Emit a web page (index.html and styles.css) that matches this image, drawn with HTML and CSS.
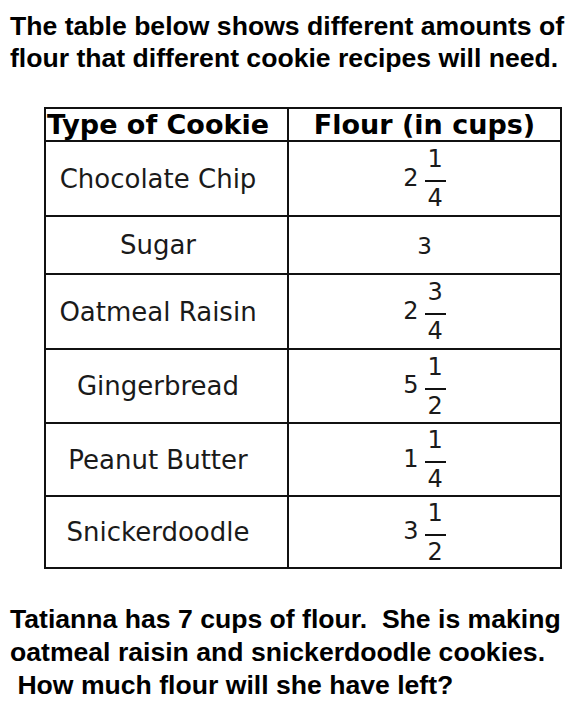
FILE: index.html
```html
<!DOCTYPE html>
<html>
<head>
<meta charset="utf-8">
<link rel="stylesheet" href="styles.css">
</head>
<body>
<p class="prompt">The table below shows different amounts of flour that different cookie recipes will need.</p>
<table class="recipes">
  <tr class="head"><th class="c1">Type of Cookie</th><th class="c2">Flour (in cups)</th></tr>
  <tr class="r1"><td class="c1">Chocolate Chip</td><td class="c2"><span class="mixed"><span class="whole">2</span><span class="frac"><span class="num">1</span><span class="den">4</span></span></span></td></tr>
  <tr class="r2"><td class="c1">Sugar</td><td class="c2"><span class="plain">3</span></td></tr>
  <tr class="r3"><td class="c1">Oatmeal Raisin</td><td class="c2"><span class="mixed"><span class="whole">2</span><span class="frac"><span class="num">3</span><span class="den">4</span></span></span></td></tr>
  <tr class="r4"><td class="c1">Gingerbread</td><td class="c2"><span class="mixed"><span class="whole">5</span><span class="frac"><span class="num">1</span><span class="den">2</span></span></span></td></tr>
  <tr class="r5"><td class="c1">Peanut Butter</td><td class="c2"><span class="mixed"><span class="whole">1</span><span class="frac"><span class="num">1</span><span class="den">4</span></span></span></td></tr>
  <tr class="r6"><td class="c1">Snickerdoodle</td><td class="c2"><span class="mixed"><span class="whole">3</span><span class="frac"><span class="num">1</span><span class="den">2</span></span></span></td></tr>
</table>
<p class="question">Tatianna has 7 cups of flour.&nbsp; She is making oatmeal raisin and snickerdoodle cookies.<br>&nbsp;How much flour will she have left?</p>
</body>
</html>
```
FILE: styles.css
```css
html, body {
  margin: 0;
  padding: 0;
  background: #fff;
  color: #000;
}
body {
  padding: 10px 0 0 10px;
  font-family: "Liberation Sans", Arial, sans-serif;
}
.prompt, .question {
  margin: 0;
  font-weight: bold;
  font-size: 26.6px;
  line-height: 32px;
  width: 570px;
}
.recipes {
  margin: 33px 0 0 34px;
  border-collapse: collapse;
  font-family: "DejaVu Sans", Verdana, sans-serif;
  color: #1a1a1a;
}
.recipes th, .recipes td {
  border: 2px solid #111;
  padding: 0;
  text-align: center;
  vertical-align: middle;
}
.recipes th {
  font-size: 27px;
  font-weight: bold;
  color: #000;
  height: 31px;
  line-height: 28px;
}
.recipes td {
  font-size: 26px;
}
.c1 { width: 243px; padding-right: 17px !important; box-sizing: border-box; }
.c2 { width: 271px; }
.r1 td { height: 73px; }
.r2 td { height: 56px; }
.r3 td { height: 73px; }
.r4 td { height: 72px; }
.r5 td { height: 71px; }
.r6 td { height: 70px; }
.plain {
  font-size: 23px;
}
.mixed {
  display: inline-flex;
  align-items: center;
  gap: 6px;
  font-size: 24px;
  vertical-align: middle;
}
.whole {
  line-height: 22px;
  margin-bottom: 2px;
}
.frac {
  display: inline-flex;
  flex-direction: column;
  align-items: center;
}
.num {
  border-bottom: 2px solid #111;
  padding: 0 3px 10px;
  line-height: 22px;
}
.den {
  line-height: 22px;
  margin-top: 5px;
}
.question {
  margin-top: 34px;
  line-height: 33px;
}
```
